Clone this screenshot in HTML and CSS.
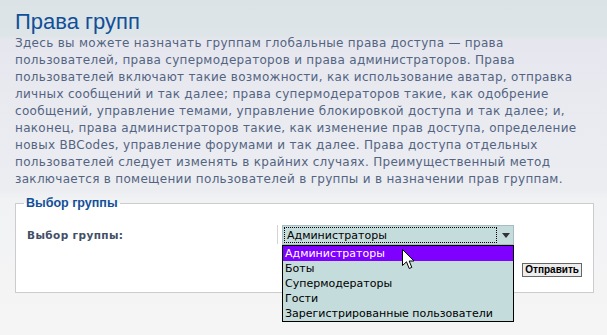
FILE: index.html
```html
<!DOCTYPE html>
<html lang="ru">
<head>
    <meta charset="UTF-8">
    <meta name="viewport" content="width=device-width, initial-scale=1.0">
    <title>Права групп</title>
    <link rel="stylesheet" href="styles.css">
</head>
<body>
    <div class="page">
        <h1>Права групп</h1>

        <p class="intro">Здесь вы можете назначать группам глобальные права доступа — права пользователей, права супермодераторов и права администраторов. Права пользователей включают такие возможности, как использование аватар, отправка личных сообщений и так далее; права супермодераторов такие, как одобрение сообщений, управление темами, управление блокировкой доступа и так далее; и, наконец, права администраторов такие, как изменение прав доступа, определение новых BBCodes, управление форумами и так далее. Права доступа отдельных пользователей следует изменять в крайних случаях. Преимущественный метод заключается в помещении пользователей в группы и в назначении прав группам.</p>

        <fieldset class="group-select">
            <legend>Выбор группы</legend>
            <dl>
                <dt><label for="group">Выбор группы:</label></dt>
                <dd>
                    <div class="select" id="group">
                        <span class="select-value">Администраторы</span>
                        <span class="select-arrow"></span>
                    </div>
                    <ul class="options">
                        <li class="selected">Администраторы</li>
                        <li>Боты</li>
                        <li>Супермодераторы</li>
                        <li>Гости</li>
                        <li>Зарегистрированные пользователи</li>
                    </ul>
                    <svg class="cursor" width="13" height="21" viewBox="0 0 13 21">
                        <path d="M0.5 0.5 L0.5 16.5 L4.5 12.8 L7.2 19.5 L9.8 18.4 L7.2 12 L12 12 Z" fill="#fff" stroke="#000" stroke-width="1"/>
                    </svg>
                </dd>
            </dl>
            <div class="quick">
                <button type="button">Отправить</button>
            </div>
        </fieldset>
    </div>
</body>
</html>
```

FILE: styles.css
```css
body {
    margin: 0;
    min-height: 335px;
    font-family: "DejaVu Sans", Verdana, sans-serif;
    background: linear-gradient(to bottom, #dbe3e6 0, #dee5e8 36px, #e6e7ee 40px, #eaebf1 120px, #ecedf1 190px, #f1f2f4 200px, #f5f5f5 335px);
}
.page {
    padding: 9px 13px 0 15px;
}
h1 {
    margin: 0;
    font-family: "Liberation Sans", Arial, sans-serif;
    font-size: 22px;
    font-weight: normal;
    line-height: 26px;
    color: #115098;
}
.intro {
    margin: 0;
    font-size: 12px;
    line-height: 17px;
    letter-spacing: 0.3px;
    color: #536482;
}
.group-select {
    margin: 8px 0 0;
    padding: 0 11px 15px 11px;
    border: 1px solid #cccccc;
    background-color: #fff;
}
.group-select legend {
    margin-left: -3px;
    padding: 0 2px;
    font-family: "Liberation Sans", Arial, sans-serif;
    font-size: 12.5px;
    font-weight: bold;
    line-height: 15px;
    color: #115098;
}
.group-select dl {
    display: flex;
    margin: 14px 0 0;
}
.group-select dt {
    width: 250px;
    font-size: 10.5px;
    font-weight: bold;
    line-height: 20px;
    letter-spacing: 0.4px;
    color: #425067;
}
.group-select dd {
    position: relative;
    margin: 0;
    padding-left: 4px;
    border-left: 1px solid #d4d4d4;
    height: 19px;
}
.select {
    display: flex;
    width: 230px;
    height: 18px;
    border: 1px solid #a9bcc4;
    background-color: #c5dcdc;
    font-size: 11px;
    line-height: 18px;
    color: #000;
}
.select-value {
    flex: 1;
    margin: 1px 0 1px 1px;
    padding-left: 2px;
    line-height: 16px;
    border: 1px dotted #000;
}
.select-arrow {
    position: relative;
    width: 16px;
}
.select-arrow::after {
    content: "";
    position: absolute;
    left: 5px;
    top: 7px;
    border-left: 4px solid transparent;
    border-right: 4px solid transparent;
    border-top: 5px solid #333;
}
.options {
    position: absolute;
    left: 4px;
    top: 20px;
    width: 230px;
    margin: 0;
    padding: 0;
    list-style: none;
    border: 1px solid #000;
    background-color: #c5dcdc;
    font-size: 11px;
    line-height: 15px;
    color: #000;
}
.options li {
    padding-left: 2px;
    white-space: nowrap;
}
.options li.selected {
    background-color: #8000ff;
    color: #fff;
}
.cursor {
    position: absolute;
    left: 124px;
    top: 24px;
}
.quick {
    margin-top: 13px;
    text-align: right;
}
.quick button {
    height: 14px;
    padding: 0 2px;
    font-family: "Liberation Sans", Arial, sans-serif;
    font-size: 10px;
    font-weight: bold;
    line-height: 12px;
    color: #000;
    background-color: #ededed;
    border: 1px solid #666;
    border-radius: 0;
}
```
